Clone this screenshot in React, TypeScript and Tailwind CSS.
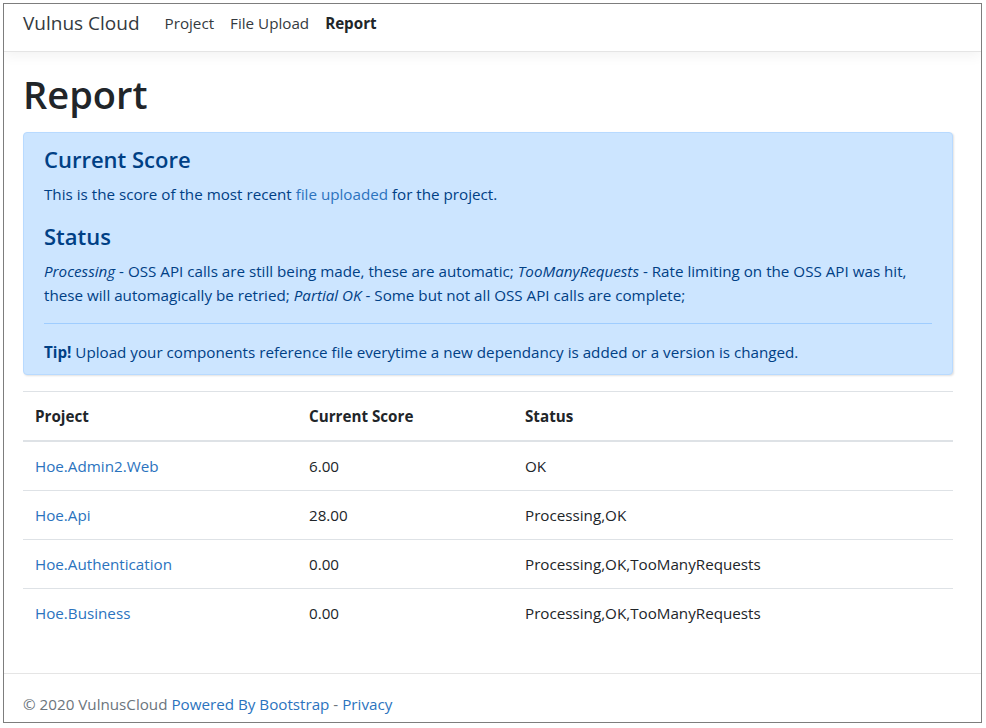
import React from 'react';

const font = { fontFamily: '"Open Sans", "Noto Sans", sans-serif' };

export default function App() {
  const rows = [
    { name: "Hoe.Admin2.Web", score: "6.00", status: "OK" },
    { name: "Hoe.Api", score: "28.00", status: "Processing,OK" },
    { name: "Hoe.Authentication", score: "0.00", status: "Processing,OK,TooManyRequests" },
    { name: "Hoe.Business", score: "0.00", status: "Processing,OK,TooManyRequests" },
  ];

  return (
    <div className="w-[986px] h-[728px] bg-white p-[3px] text-[#212529]" style={font}>
      <div className="w-[979px] h-[720px] border border-[#7d7d7d] flex flex-col overflow-hidden">
        {/* Navbar */}
        <nav className="h-[48px] shrink-0 border-b border-[#e5e5e5] shadow-[0_4px_12px_rgba(0,0,0,0.05)] flex items-center pl-[19px] pb-[8px]">
          <span className="text-[19px] text-[#343a40] mr-[25px]">Vulnus Cloud</span>
          <div className="flex items-center gap-[16px] text-[15.2px] text-[#343a40]">
            <span>Project</span>
            <span>File Upload</span>
            <span className="font-bold text-[#212529]">Report</span>
          </div>
        </nav>

        <main className="flex-1 px-[19px] pt-[20px]">
          <h1 className="text-[38px] leading-[1.2] font-semibold mb-[14px]">Report</h1>

          {/* Alert */}
          <div className="w-[930px] bg-[#cce5ff] border border-[#b8daff] rounded-[4px] text-[#004085] px-[20px] pt-[12px] pb-[10px] mb-[16px] shadow-[1px_1px_2px_rgba(0,0,0,0.12)] text-[15.2px] leading-[24px]">
            <h4 className="text-[22px] leading-[29px] font-semibold mb-[8px]">Current Score</h4>
            <p className="mb-[16px]">
              This is the score of the most recent <a className="text-[#2b73be]">file uploaded</a> for the project.
            </p>
            <h4 className="text-[22px] leading-[29px] font-semibold mb-[8px]">Status</h4>
            <p>
              <i>Processing</i> - OSS API calls are still being made, these are automatic; <i>TooManyRequests</i> - Rate limiting on the OSS API was hit, these will automagically be retried; <i>Partial OK</i> - Some but not all OSS API calls are complete;
            </p>
            <hr className="my-[16px] border-0 border-t border-[#9fcdff]" />
            <p>
              <b>Tip!</b> Upload your components reference file everytime a new dependancy is added or a version is changed.
            </p>
          </div>

          {/* Table */}
          <table className="w-[930px] border-collapse text-[15.2px] leading-[24px]">
            <thead>
              <tr className="border-t border-[#dee2e6]">
                <th className="w-[274px] text-left font-bold p-[12px] border-b-2 border-[#dee2e6]">Project</th>
                <th className="w-[216px] text-left font-bold p-[12px] border-b-2 border-[#dee2e6]">Current Score</th>
                <th className="text-left font-bold p-[12px] border-b-2 border-[#dee2e6]">Status</th>
              </tr>
            </thead>
            <tbody>
              {rows.map((r, i) => (
                <tr key={r.name} className={i > 0 ? "border-t border-[#dee2e6]" : ""}>
                  <td className="p-[12px] text-[#2b73be]">{r.name}</td>
                  <td className="p-[12px]">{r.score}</td>
                  <td className="p-[12px]">{r.status}</td>
                </tr>
              ))}
            </tbody>
          </table>
        </main>

        {/* Footer */}
        <footer className="h-[49px] shrink-0 border-t border-[#e5e5e5] pl-[19px] leading-[60px] text-[15.2px] text-[#6c757d] whitespace-nowrap">
          © 2020 VulnusCloud <a className="text-[#2b73be]">Powered By Bootstrap</a> - <a className="text-[#2b73be]">Privacy</a>
        </footer>
      </div>
    </div>
  );
}
